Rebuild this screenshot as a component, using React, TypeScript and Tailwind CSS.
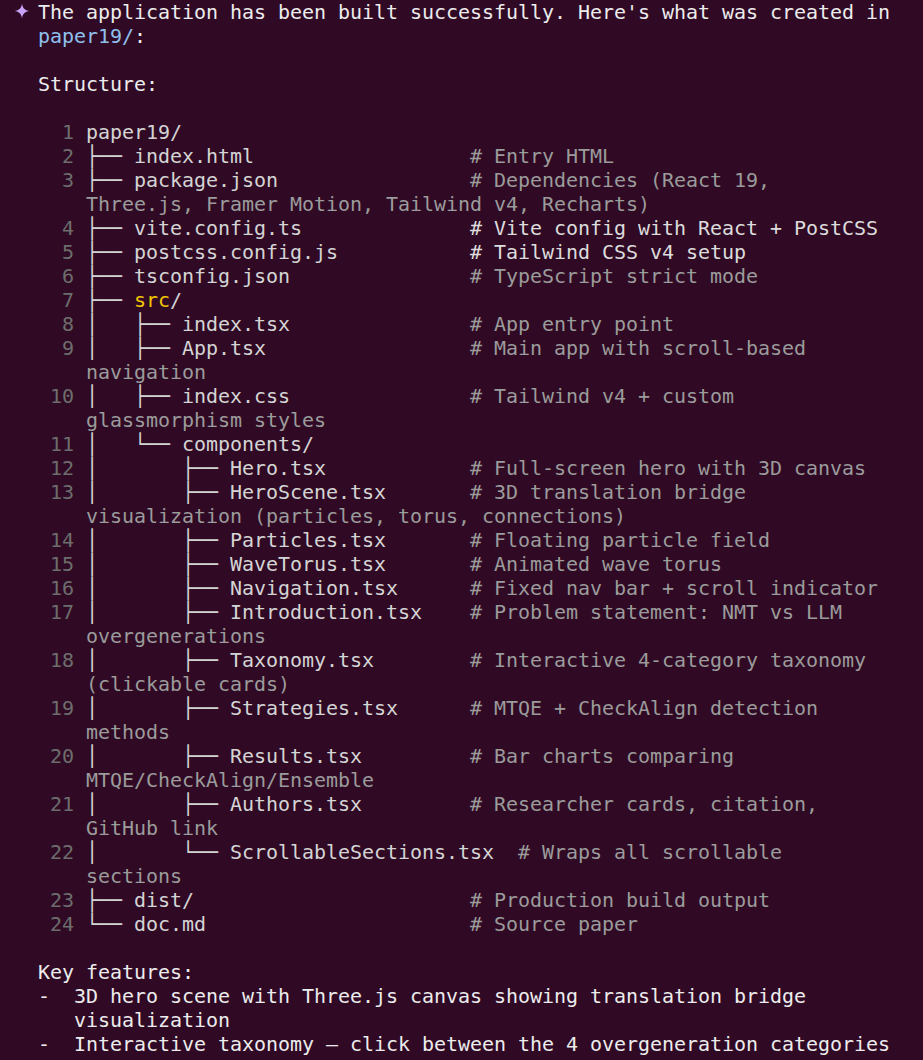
type Row =
  | { n: number; tree: string; name: string; dir?: boolean; c?: string; hi?: boolean }
  | { wrap: string }

const rows: Row[] = [
  { n: 1, tree: "", name: "paper19/" },
  { n: 2, tree: "├── ", name: "index.html", c: "# Entry HTML" },
  { n: 3, tree: "├── ", name: "package.json", c: "# Dependencies (React 19," },
  { wrap: "Three.js, Framer Motion, Tailwind v4, Recharts)" },
  { n: 4, tree: "├── ", name: "vite.config.ts", c: "# Vite config with React + PostCSS", hi: true },
  { n: 5, tree: "├── ", name: "postcss.config.js", c: "# Tailwind CSS v4 setup", hi: true },
  { n: 6, tree: "├── ", name: "tsconfig.json", c: "# TypeScript strict mode" },
  { n: 7, tree: "├── ", name: "src", dir: true },
  { n: 8, tree: "│   ├── ", name: "index.tsx", c: "# App entry point" },
  { n: 9, tree: "│   ├── ", name: "App.tsx", c: "# Main app with scroll-based" },
  { wrap: "navigation" },
  { n: 10, tree: "│   ├── ", name: "index.css", c: "# Tailwind v4 + custom" },
  { wrap: "glassmorphism styles" },
  { n: 11, tree: "│   └── ", name: "components/" },
  { n: 12, tree: "│       ├── ", name: "Hero.tsx", c: "# Full-screen hero with 3D canvas" },
  { n: 13, tree: "│       ├── ", name: "HeroScene.tsx", c: "# 3D translation bridge" },
  { wrap: "visualization (particles, torus, connections)" },
  { n: 14, tree: "│       ├── ", name: "Particles.tsx", c: "# Floating particle field" },
  { n: 15, tree: "│       ├── ", name: "WaveTorus.tsx", c: "# Animated wave torus" },
  { n: 16, tree: "│       ├── ", name: "Navigation.tsx", c: "# Fixed nav bar + scroll indicator" },
  { n: 17, tree: "│       ├── ", name: "Introduction.tsx", c: "# Problem statement: NMT vs LLM" },
  { wrap: "overgenerations" },
  { n: 18, tree: "│       ├── ", name: "Taxonomy.tsx", c: "# Interactive 4-category taxonomy" },
  { wrap: "(clickable cards)" },
  { n: 19, tree: "│       ├── ", name: "Strategies.tsx", c: "# MTQE + CheckAlign detection" },
  { wrap: "methods" },
  { n: 20, tree: "│       ├── ", name: "Results.tsx", c: "# Bar charts comparing" },
  { wrap: "MTQE/CheckAlign/Ensemble" },
  { n: 21, tree: "│       ├── ", name: "Authors.tsx", c: "# Researcher cards, citation," },
  { wrap: "GitHub link" },
  { n: 22, tree: "│       └── ", name: "ScrollableSections.tsx", c: "# Wraps all scrollable" },
  { wrap: "sections" },
  { n: 23, tree: "├── ", name: "dist/", c: "# Production build output" },
  { n: 24, tree: "└── ", name: "doc.md", c: "# Source paper" },
]

function Sparkle() {
  return (
    <svg width="16" height="16" viewBox="0 0 16 16" className="inline-block">
      <path d="M8 0.5 C8.6 5.2 10.8 7.4 15.5 8 C10.8 8.6 8.6 10.8 8 15.5 C7.4 10.8 5.2 8.6 0.5 8 C5.2 7.4 7.4 5.2 8 0.5 Z" fill="#c9a3f7" />
    </svg>
  )
}

function CodeRow({ row }: { row: Row }) {
  if ("wrap" in row) {
    return <div className="h-6 text-[#9b9b9b]">{"    " + row.wrap}</div>
  }
  const num = String(row.n).padStart(3, " ") + " "
  const left = row.tree + row.name + (row.dir ? "/" : "")
  const pad = row.c ? " ".repeat(Math.max(2, 32 - left.length)) : ""
  return (
    <div className="h-6">
      <span className="text-[#6d6d6d]">{num}</span>
      <span className="text-[#d4d4d4]">{row.tree}</span>
      {row.dir ? (
        <>
          <span className="text-[#f2c500]">{row.name}</span>
          <span className="text-[#d4d4d4]">/</span>
        </>
      ) : (
        <span className="text-[#d4d4d4]">{row.name}</span>
      )}
      {row.c && <span className={row.hi ? "text-[#dcdcdc]" : "text-[#9b9b9b]"}>{pad + row.c}</span>}
    </div>
  )
}

export default function App() {
  return (
    <div className="min-h-screen bg-[#300a24] font-['DejaVu_Sans_Mono','Liberation_Mono',monospace] text-[20px] leading-6 tracking-[-0.04px] text-[#ececec] whitespace-pre overflow-hidden">
      <div className="flex h-6 pl-[14px]">
        <span className="flex w-6 items-center pb-[2px]">
          <Sparkle />
        </span>
        <span>The application has been built successfully. Here's what was created in</span>
      </div>
      <div className="h-6 pl-[38px]">
        <span className="text-[#8fc0ee]">paper19/</span>:
      </div>
      <div className="h-6" />
      <div className="h-6 pl-[38px]">Structure:</div>
      <div className="h-6" />

      {/* tree listing */}
      <div className="pl-[38px]">
        {rows.map((r, i) => (
          <CodeRow key={i} row={r} />
        ))}
      </div>

      <div className="h-6" />
      <div className="pl-[38px]">
        <div className="h-6">Key features:</div>
        <div className="h-6">-  3D hero scene with Three.js canvas showing translation bridge</div>
        <div className="h-6">   visualization</div>
        <div className="h-6">-  Interactive taxonomy — click between the 4 overgeneration categories</div>
      </div>
    </div>
  )
}
